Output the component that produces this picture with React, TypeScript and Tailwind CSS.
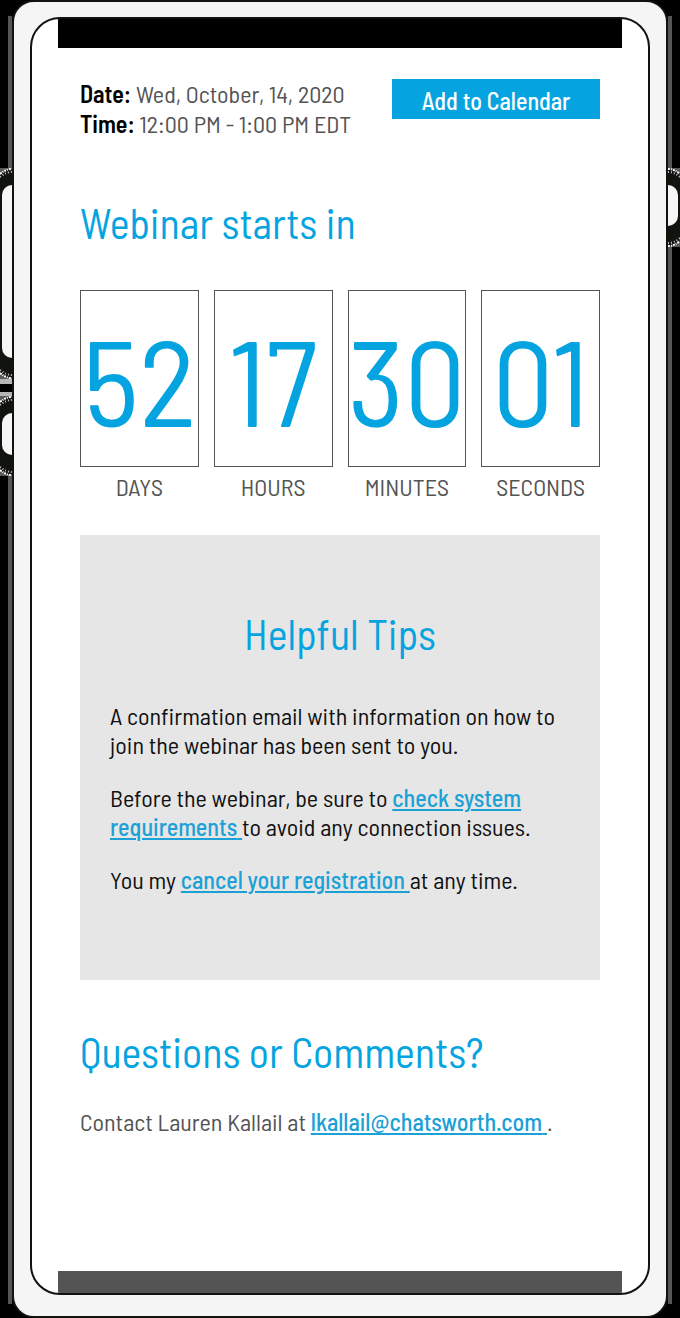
import type { ReactNode } from 'react';

const countdown = [
  { value: '52', label: 'DAYS' },
  { value: '17', label: 'HOURS' },
  { value: '30', label: 'MINUTES' },
  { value: '01', label: 'SECONDS' },
];

function SectionTitle({ className, children }: { className: string; children: ReactNode }) {
  return <h2 className={`text-[42px] leading-[56px] text-[#05a4e1] ${className}`}>{children}</h2>;
}

function TextLink({ href, children }: { href: string; children: ReactNode }) {
  return (
    <a href={href} className="font-medium text-[#1ba1d6] underline decoration-2 underline-offset-2">
      {children}
    </a>
  );
}

function SideKey({ y, height, keyX, flip }: { y: number; height: number; keyX: number; flip?: boolean }) {
  const near = flip ? 1 : 6;
  const far = flip ? 6 : 1;
  return (
    <g>
      <rect y={y} width="12" height={height} fill="#5a5a5a" />
      <path
        d={`M0 ${y + near}Q6 ${y + 1} 12 ${y + far}V${y + height - far}Q6 ${y + height - 1} 0 ${y + height - near}Z`}
        fill="#11130f"
      />
      <path
        d={`M0 ${y + near}Q6 ${y + 1} 12 ${y + far}M0 ${y + height - near}Q6 ${y + height - 1} 12 ${y + height - far}`}
        fill="none"
        stroke="#fff"
        strokeWidth="2"
        strokeDasharray="2 1 1 1"
      />
      <path
        d={`M0 ${y + near + 3}Q6 ${y + 4} 12 ${y + far + 3}M0 ${y + height - near - 3}Q6 ${y + height - 4} 12 ${y + height - far - 3}`}
        fill="none"
        stroke="#c8c8c8"
        strokeWidth="2"
        strokeDasharray="1 2"
      />
      <rect x={keyX} y={y + 17} width="22" height={height - 38} rx="10" fill="#f6f6f6" />
    </g>
  );
}

export default function App() {
  return (
    <div className="relative overflow-hidden bg-black px-3 font-['Barlow_Semi_Condensed',sans-serif] text-2xl text-[#545454]">
      <svg className="absolute top-0 left-0 h-full w-3" aria-hidden="true">
        <rect x="8" y="16" width="4" height="1288" fill="#555" />
        <rect y="379" width="12" height="26" fill="#b5b5b5" />
        <rect y="384" width="12" height="8" fill="#000" />
        <SideKey y={168} height={211} keyX={2} />
        <SideKey y={396} height={80} keyX={2} />
      </svg>
      <svg className="absolute top-0 right-0 h-full w-3" aria-hidden="true">
        <rect x="0" y="16" width="4" height="1288" fill="#555" />
        <SideKey y={168} height={79} keyX={-12} flip />
      </svg>

      <div className="relative rounded-[22px] border-2 border-[#11130f] bg-[#f5f5f5] px-4 pt-[15px] pb-[21px]">
        <div className="overflow-hidden rounded-[30px] border-2 border-[#11130f] bg-white px-[26px]">
          <div className="h-[29px] bg-black" />
          <main className="px-[22px] pt-[31px] pb-[134px]">
            <div className="flex items-start justify-between">
              <p className="leading-[30px]">
                <b className="font-semibold text-black">Date:</b> Wed, October, 14, 2020
                <br />
                <b className="font-semibold text-black">Time:</b> 12:00 PM - 1:00 PM EDT
              </p>
              <button type="button" className="h-10 w-[208px] bg-[#05a4e1] pt-1 font-medium text-white">
                Add to Calendar
              </button>
            </div>

            <SectionTitle className="mt-[55px]">Webinar starts in</SectionTitle>

            <div className="mt-10 grid grid-cols-4 gap-[15px]">
              {countdown.map(({ value, label }) => (
                <div key={label} className="text-center">
                  <div className="flex h-[177px] items-center justify-center border border-[#545454] pb-[2px] text-[122px] leading-none text-[#05a4e1]">
                    {value}
                  </div>
                  <p className="mt-[5px] leading-[30px]">{label}</p>
                </div>
              ))}
            </div>

            <section className="mt-[33px] bg-[#e6e6e6] px-[30px] pt-[70px] pb-[86px] text-[#111]">
              <SectionTitle className="text-center">Helpful Tips</SectionTitle>
              <div className="mt-10 space-y-6 leading-[29px]">
                <p>A confirmation email with information on how to join the webinar has been sent to you.</p>
                <p>
                  Before the webinar, be sure to <TextLink href="#requirements">check system requirements{' '}</TextLink>
                  to avoid any connection issues.
                </p>
                <p>
                  You my <TextLink href="#cancel">cancel your registration{' '}</TextLink>at any time.
                </p>
              </div>
            </section>

            <SectionTitle className="mt-[43px]">Questions or Comments?</SectionTitle>
            <p className="mt-7 leading-[30px]">
              Contact Lauren Kallail at{' '}
              <TextLink href="mailto:lkallail@chatsworth.com">lkallail@chatsworth.com{' '}</TextLink>.
            </p>
          </main>
          <div className="h-[22px] bg-[#545454]" />
        </div>
      </div>
    </div>
  );
}
